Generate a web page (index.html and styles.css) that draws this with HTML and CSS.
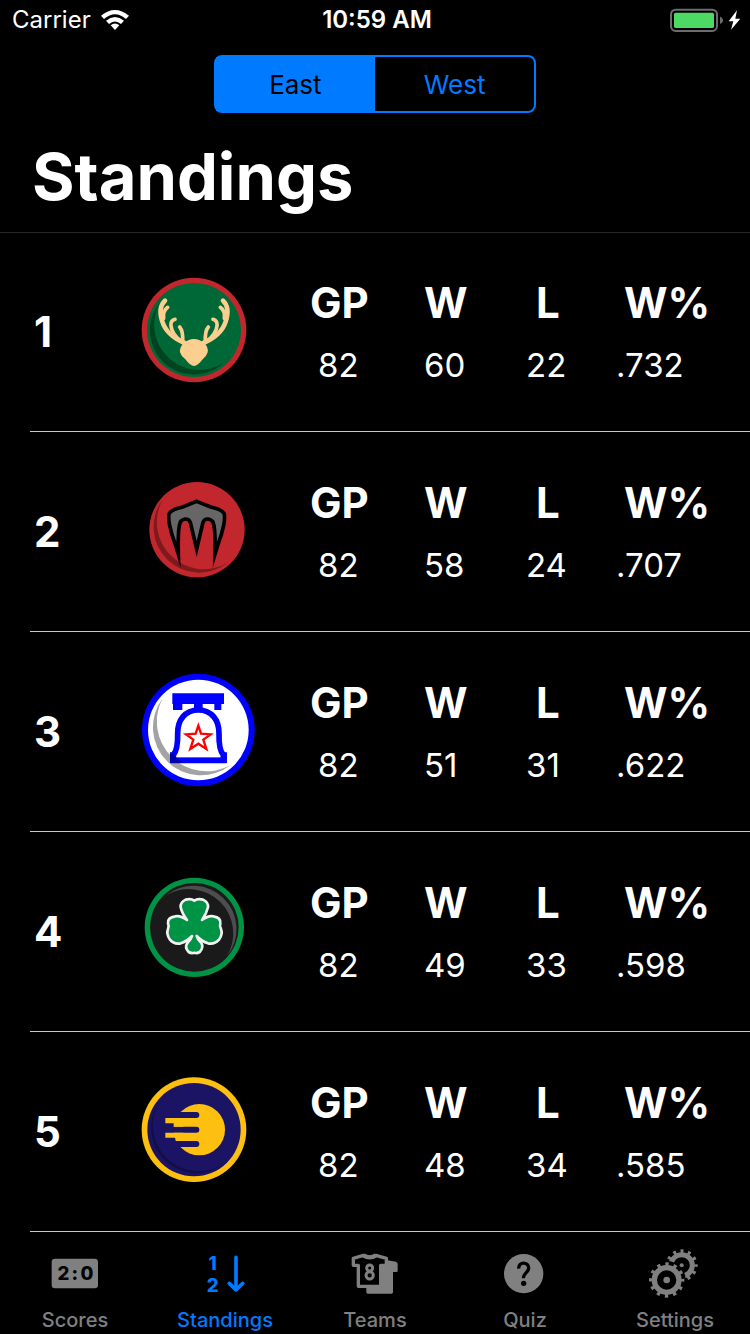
FILE: index.html
```html
<!DOCTYPE html>
<html lang="en">
<head>
<meta charset="utf-8">
<meta name="viewport" content="width=device-width, initial-scale=1">
<title>Standings</title>
<link rel="stylesheet" href="styles.css">
</head>
<body>
<header class="header">
  <div class="status">
    <div class="status-left">
      <span>Carrier</span>
      <svg class="wifi" viewBox="0 0 84 60" aria-hidden="true">
        <path d="M0 17Q42 -17 84 17L75 27Q42 -1 9 27Z"/>
        <path d="M15 32Q42 10 69 32L60 42Q42 27 24 42Z"/>
        <path d="M29 46Q42 35 55 46L42 60Z"/>
      </svg>
    </div>
    <span class="time">10:59 AM</span>
    <svg class="battery" viewBox="0 0 216 72" aria-hidden="true">
      <rect x="3" y="5" width="138" height="64" rx="14" fill="none" stroke="#6c6c6c" stroke-width="6"/>
      <rect x="12" y="14" width="120" height="46" rx="5" fill="#4cd964"/>
      <path d="M150 26Q159 29 159 37Q159 45 150 48Z" fill="#6c6c6c"/>
      <path d="M201 7L176 40H190L183 65L211 32H196Z" fill="#fff"/>
    </svg>
  </div>
  <div class="segments" role="group" aria-label="Conference">
    <button class="segment segment-on" type="button" aria-pressed="true">East</button>
    <button class="segment" type="button" aria-pressed="false">West</button>
  </div>
  <h1 class="title">Standings</h1>
</header>

<main class="main">
  <ol class="list">
    <li class="team">
      <div class="rank">1</div>
      <svg class="logo" viewBox="0 6 390 390" role="img" aria-label="Milwaukee">
        <circle cx="192" cy="195" r="157" fill="#c1272d"/>
        <circle cx="192" cy="195" r="141" fill="#006837"/>
        <path d="M88 115A132 132 0 0 0 282 293A136 136 0 0 1 88 115Z" fill="#00431f"/>
        <g fill="none" stroke="#fdcf8f" stroke-linecap="round" stroke-width="11">
          <path d="M105 107C88 123 90 148 97 170C108 205 135 222 164 234" stroke-width="14"/>
          <path d="M113 127Q98 138 101 160"/>
          <path d="M135 163C116 168 122 190 132 207Q140 220 155 228"/>
          <path d="M149 186Q160 198 158 232"/>
          <path d="M279 107C296 123 294 148 287 170C276 205 249 222 220 234" stroke-width="14"/>
          <path d="M271 127Q286 138 283 160"/>
          <path d="M249 163C268 168 262 190 252 207Q244 220 229 228"/>
          <path d="M235 186Q224 198 226 232"/>
        </g>
        <path d="M162 234Q176 222 192 222Q208 222 222 234Q236 246 233 262Q230 273 218 283Q203 303 192 303Q181 303 166 283Q153 273 150 262Q148 246 162 234Z" fill="#fdcf8f"/>
      </svg>
      <dl class="stats">
        <div class="stat stat-gp"><dt>GP</dt><dd>82</dd></div>
        <div class="stat"><dt>W</dt><dd>60</dd></div>
        <div class="stat stat-l"><dt>L</dt><dd>22</dd></div>
        <div class="stat stat-pct"><dt>W%</dt><dd>.732</dd></div>
      </dl>
    </li>
    <li class="team">
      <div class="rank">2</div>
      <svg class="logo" viewBox="0 6 390 390" role="img" aria-label="Toronto">
        <circle cx="201" cy="194" r="143" fill="#c1272d"/>
        <path d="M98 104A137 137 0 0 0 292 294A141 141 0 0 1 98 104Z" fill="#7d1a1e"/>
        <path d="M200 109L242 126Q275 133 282 145Q286 154 281 181Q276 206 265 235L255 268Q257 190 249 171Q242 162 233 162Q223 162 219 172Q213 198 200 252Q187 198 181 172Q177 162 167 162Q158 162 151 171Q143 190 145 268L135 235Q124 206 119 181Q114 154 118 145Q125 133 158 126Z" fill="#666"/>
        <path d="M200 109L242 126Q275 133 282 145Q286 154 281 181Q276 206 265 235L255 268Q257 190 249 171Q242 162 233 162Q223 162 219 172Q213 198 200 252Q187 198 181 172Q177 162 167 162Q158 162 151 171Q143 190 145 268L135 235Q124 206 119 181Q114 154 118 145Q125 133 158 126Z" fill="none" stroke="#000" stroke-width="11" stroke-miterlimit="8"/>
      </svg>
      <dl class="stats">
        <div class="stat stat-gp"><dt>GP</dt><dd>82</dd></div>
        <div class="stat"><dt>W</dt><dd>58</dd></div>
        <div class="stat stat-l"><dt>L</dt><dd>24</dd></div>
        <div class="stat stat-pct"><dt>W%</dt><dd>.707</dd></div>
      </dl>
    </li>
    <li class="team">
      <div class="rank">3</div>
      <svg class="logo" viewBox="0 6 390 390" role="img" aria-label="Philadelphia">
        <circle cx="205" cy="195" r="169" fill="#00f"/>
        <circle cx="205" cy="195" r="151" fill="#fff"/>
        <path d="M98 100A144 144 0 0 0 302 300A149 149 0 0 1 98 100Z" fill="#a3a3a3"/>
        <path d="M127 85H282V117H274V135H253V117H218V132H192V117H157V135H129V117H127Z" fill="#00f"/>
        <path d="M205 135C165 135 143 165 143 205Q144 255 130 270V286H280V270Q266 255 267 205C267 165 245 135 205 135Z" fill="#fff" stroke="#00f" stroke-width="17"/>
        <path d="M120 262H134V278H276V262H291V294H120Z" fill="#00f"/>
        <path d="M120 280V294H160Q142 283 128 266H120Z" fill="#00a"/>
        <path d="M205 182L213 206L242 208L220 224L229 252L205 236L181 252L190 224L168 208L197 206Z" fill="#fff" stroke="#f00" stroke-width="7"/>
      </svg>
      <dl class="stats">
        <div class="stat stat-gp"><dt>GP</dt><dd>82</dd></div>
        <div class="stat"><dt>W</dt><dd>51</dd></div>
        <div class="stat stat-l"><dt>L</dt><dd>31</dd></div>
        <div class="stat stat-pct"><dt>W%</dt><dd>.622</dd></div>
      </dl>
    </li>
    <li class="team">
      <div class="rank">4</div>
      <svg class="logo" viewBox="0 6 390 390" role="img" aria-label="Boston">
        <circle cx="193" cy="187" r="149" fill="#009245"/>
        <circle cx="193" cy="187" r="133" fill="#1a1a1a"/>
        <path d="M107 92A130 130 0 0 1 290 275A133 133 0 0 0 107 92Z" fill="#4d4d4d"/>
        <path d="M193 107Q203 100 219 104Q236 112 234 127Q230 145 216 165Q236 150 250 154Q273 157 271 175Q268 183 273 192Q279 208 267 224Q254 239 234 235Q215 229 200 213Q202 223 214 234Q222 247 209 261Q201 266 193 263Q184 266 176 261Q163 247 172 234Q183 223 186 213Q171 229 152 235Q132 239 120 224Q108 208 114 192Q118 183 114 175Q112 157 136 154Q150 150 171 165Q156 145 152 127Q150 112 167 104Q183 100 193 107Z" fill="#009245" stroke="#f2f2f2" stroke-width="8" stroke-linejoin="round"/>
      </svg>
      <dl class="stats">
        <div class="stat stat-gp"><dt>GP</dt><dd>82</dd></div>
        <div class="stat"><dt>W</dt><dd>49</dd></div>
        <div class="stat stat-l"><dt>L</dt><dd>33</dd></div>
        <div class="stat stat-pct"><dt>W%</dt><dd>.598</dd></div>
      </dl>
    </li>
    <li class="team">
      <div class="rank">5</div>
      <svg class="logo" viewBox="0 6 390 390" role="img" aria-label="Indiana">
        <circle cx="192" cy="194" r="157" fill="#fdc010"/>
        <circle cx="192" cy="194" r="140" fill="#1b1464"/>
        <path d="M88 110A136 136 0 0 0 281 297A138 138 0 0 1 88 110Z" fill="#130e45"/>
        <circle cx="208" cy="194" r="77" fill="#fdc010"/>
        <path d="M100 141H199A9 9 0 0 1 199 159H100ZM100 185H199A9 9 0 0 1 199 203H100ZM100 228H199A9 9 0 0 1 199 246H100Z" fill="#1b1464"/>
        <path d="M106 159H160V185H131V175H106ZM106 203H160V228H137V218H106Z" fill="#fdc010"/>
      </svg>
      <dl class="stats">
        <div class="stat stat-gp"><dt>GP</dt><dd>82</dd></div>
        <div class="stat"><dt>W</dt><dd>48</dd></div>
        <div class="stat stat-l"><dt>L</dt><dd>34</dd></div>
        <div class="stat stat-pct"><dt>W%</dt><dd>.585</dd></div>
      </dl>
    </li>
  </ol>
</main>

<nav class="tabs" aria-label="Sections">
  <a class="tab" href="#scores">
    <svg class="tab-icon" viewBox="135 60 180 168" aria-hidden="true">
      <rect x="155" y="101" width="139" height="89" rx="10" fill="currentColor"/>
      <text class="score-digits" x="190 224 261" y="165" text-anchor="middle">2:0</text>
    </svg>
    <span>Scores</span>
  </a>
  <a class="tab tab-on" href="#standings" aria-current="page">
    <svg class="tab-icon" viewBox="585 60 180 168" aria-hidden="true">
      <text class="order-digits" x="638" y="135" text-anchor="middle">1</text>
      <text class="order-digits" x="638" y="200" text-anchor="middle">2</text>
      <path d="M708 97V194M688 175L708 195L728 175" fill="none" stroke="currentColor" stroke-width="11" stroke-linecap="round" stroke-linejoin="round"/>
    </svg>
    <span>Standings</span>
  </a>
  <a class="tab" href="#teams">
    <svg class="tab-icon" viewBox="135 60 180 168" aria-hidden="true">
      <path d="M255 104L288 110Q293 112 293 117V138Q293 141 289 141H279V202Q279 206 274 206H204Q199 206 199 202V180H240V122H258Z" fill="currentColor"/>
      <path d="M160 100L190 91Q209 102 228 91L259 100V121H242V184H175V121H160Z" fill="#000" stroke="currentColor" stroke-width="10" stroke-linejoin="round"/>
      <path d="M190 91Q209 103 228 91" fill="none" stroke="currentColor" stroke-width="13"/>
      <g fill="none" stroke="currentColor" stroke-width="9"><circle cx="209" cy="129" r="9"/><circle cx="209" cy="151" r="11"/></g>
    </svg>
    <span>Teams</span>
  </a>
  <a class="tab" href="#quiz">
    <svg class="tab-icon" viewBox="75 60 180 168" aria-hidden="true">
      <circle cx="161" cy="146" r="59" fill="currentColor"/>
      <path d="M146 131C145 109 176 109 176 129C176 143 160 143 160 160" fill="none" stroke="#000" stroke-width="10"/>
      <circle cx="161" cy="175" r="8" fill="#000"/>
    </svg>
    <span>Quiz</span>
  </a>
  <a class="tab" href="#settings">
    <svg class="tab-icon" viewBox="525 60 180 168" aria-hidden="true">
      <g fill="none" stroke="currentColor">
        <circle cx="635" cy="121" r="32" stroke-width="15"/>
        <circle cx="635" cy="121" r="42" stroke-width="12" pathLength="120" stroke-dasharray="4 6" stroke-dashoffset="2"/>
      </g>
      <circle cx="635" cy="121" r="6" fill="currentColor"/>
      <circle cx="590" cy="165" r="50" fill="none" stroke="#000" stroke-width="14"/>
      <circle cx="590" cy="165" r="42" fill="#000"/>
      <g fill="none" stroke="currentColor">
        <circle cx="590" cy="165" r="37" stroke-width="16"/>
        <circle cx="590" cy="165" r="47" stroke-width="12" pathLength="120" stroke-dasharray="4 6" stroke-dashoffset="2"/>
      </g>
      <circle cx="590" cy="165" r="10" fill="currentColor"/>
    </svg>
    <span>Settings</span>
  </a>
</nav>
</body>
</html>
```
FILE: styles.css
```css
* {
  box-sizing: border-box;
}

body {
  display: flex;
  flex-direction: column;
  min-height: 100vh;
  margin: 0;
  background: #000;
  color: #fff;
  font-family: Inter, "Liberation Sans", sans-serif;
}

.header {
  box-shadow: 0 1px 0 #262626;
}

.status {
  display: grid;
  grid-template-columns: 1fr auto 1fr;
  align-items: center;
  height: 40px;
  padding: 0 8px 0 12px;
  font-size: 24px;
  line-height: 40px;
}

.status-left {
  display: flex;
  align-items: center;
  gap: 10px;
}

.wifi {
  width: 28px;
  height: 20px;
  fill: #fff;
}

.time {
  font-weight: 600;
}

.battery {
  justify-self: end;
  width: 72px;
  height: 24px;
}

.segments {
  display: flex;
  width: 43%;
  height: 58px;
  margin: 15px auto 0;
  border: 2px solid #007aff;
  border-radius: 8px;
}

.segment {
  flex: 1;
  padding: 0;
  border: 0;
  border-radius: 8px;
  background: #000;
  color: #007aff;
  font-family: inherit;
  font-size: 26px;
}

.segment-on {
  border-radius: 0;
  background: #007aff;
  color: #000;
}

.title {
  margin: 24px 0 15px;
  padding: 0 32px;
  font-size: 65px;
  font-weight: 700;
  line-height: 80px;
}

.main {
  flex: 1;
}

.list {
  margin: 0;
  padding: 0 0 0 30px;
  list-style: none;
}

.team {
  display: flex;
  align-items: center;
  min-height: 200px;
  border-bottom: 1px solid #c8c7cc;
}

.rank {
  width: 100px;
  padding-left: 4px;
  font-size: 42px;
  font-weight: 700;
  line-height: 52px;
}

.logo {
  flex: none;
  width: 130px;
  height: 130px;
}

.stats {
  display: grid;
  flex: 1;
  grid-template-columns: 114fr 102fr 90fr 134fr;
  margin: 0 0 0 50px;
}

.stat {
  display: flex;
  flex-direction: column;
  gap: 14px;
}

.stat dt {
  font-size: 42px;
  font-weight: 700;
  line-height: 52px;
}

.stat dd {
  margin: 0;
  font-size: 33px;
  line-height: 44px;
}

.stat-gp dd,
.stat-pct dt {
  padding-left: 8px;
}

.stat-l dt {
  padding-left: 10px;
}

.tabs {
  display: grid;
  grid-template-columns: repeat(5, 1fr);
  padding: 13px 0 2px;
}

.tab {
  display: flex;
  flex-direction: column;
  align-items: center;
  gap: 7px;
  color: #808080;
  font-size: 20px;
  font-weight: 500;
  line-height: 24px;
  text-decoration: none;
}

.tab-on {
  color: #007aff;
}

.tab-icon {
  width: 60px;
  height: 56px;
}

.score-digits,
.order-digits {
  font-size: 56px;
  font-weight: 800;
}

.score-digits {
  fill: #000;
}

.order-digits {
  fill: currentColor;
}
```
